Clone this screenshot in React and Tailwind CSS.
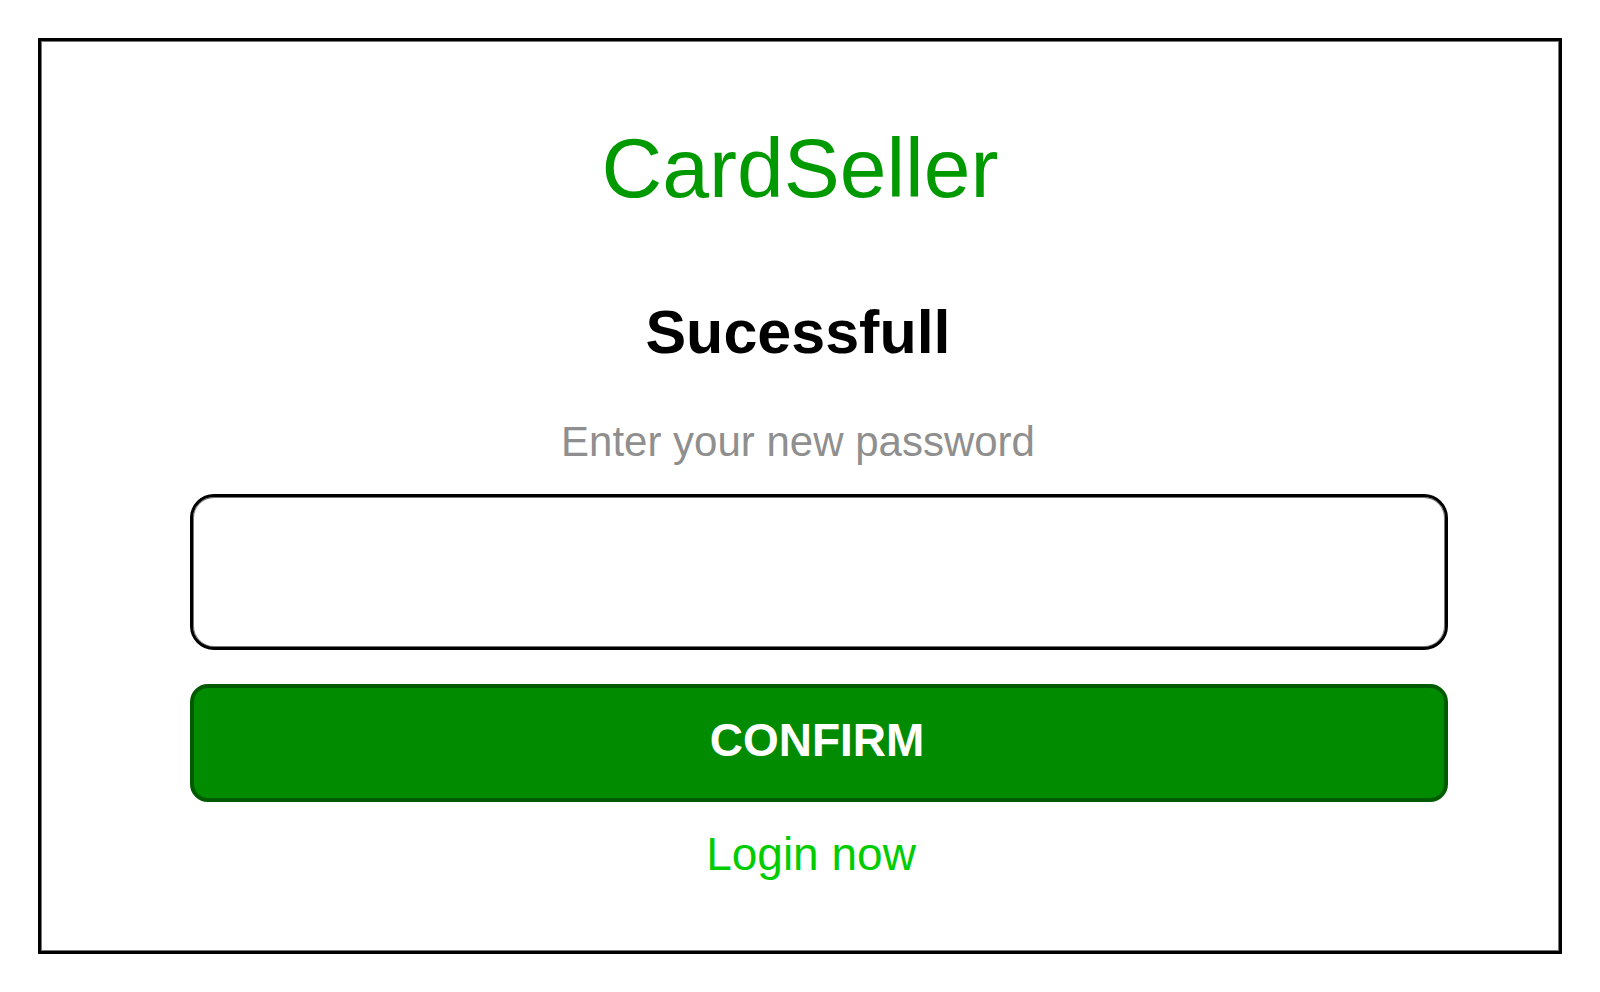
export default function App() {
  return (
    <main className="m-[38px] border-3 border-black bg-white pt-[79px] pb-[69px] text-center font-['Liberation_Sans',Arial,sans-serif] shadow-[inset_0_0_0_1px_#777777]">
      <h1 className="text-[84px] leading-[96px] text-[#009900]">CardSeller</h1>
      <h2 className="mt-20 pr-1 text-[61px] leading-[72px] font-bold text-black">Sucessfull</h2>
      <form className="mt-[50px]" onSubmit={(event) => event.preventDefault()}>
        <label
          htmlFor="new-password"
          className="block pr-1 text-[42px] leading-[48px] text-[#8f8f8f]"
        >
          Enter your new password
        </label>
        <div className="mt-7 flex flex-col gap-[34px] pr-[111px] pl-[149px]">
          <input
            id="new-password"
            type="password"
            autoComplete="new-password"
            className="h-[156px] w-full rounded-3xl border-3 border-black bg-white px-8 text-[42px] text-black shadow-[inset_0_0_0_1px_#777777] outline-none"
          />
          <button
            type="submit"
            className="w-full rounded-[18px] border-4 border-[#005a00] bg-[#008b00] pt-6 pr-1 pb-[30px] text-[46px] leading-[56px] font-bold text-white"
          >
            CONFIRM
          </button>
        </div>
      </form>
      <div className="mt-6 pl-[22px]">
        <a href="#login" className="text-[46px] leading-[56px] text-[#00cc00]">
          Login now
        </a>
      </div>
    </main>
  );
}
